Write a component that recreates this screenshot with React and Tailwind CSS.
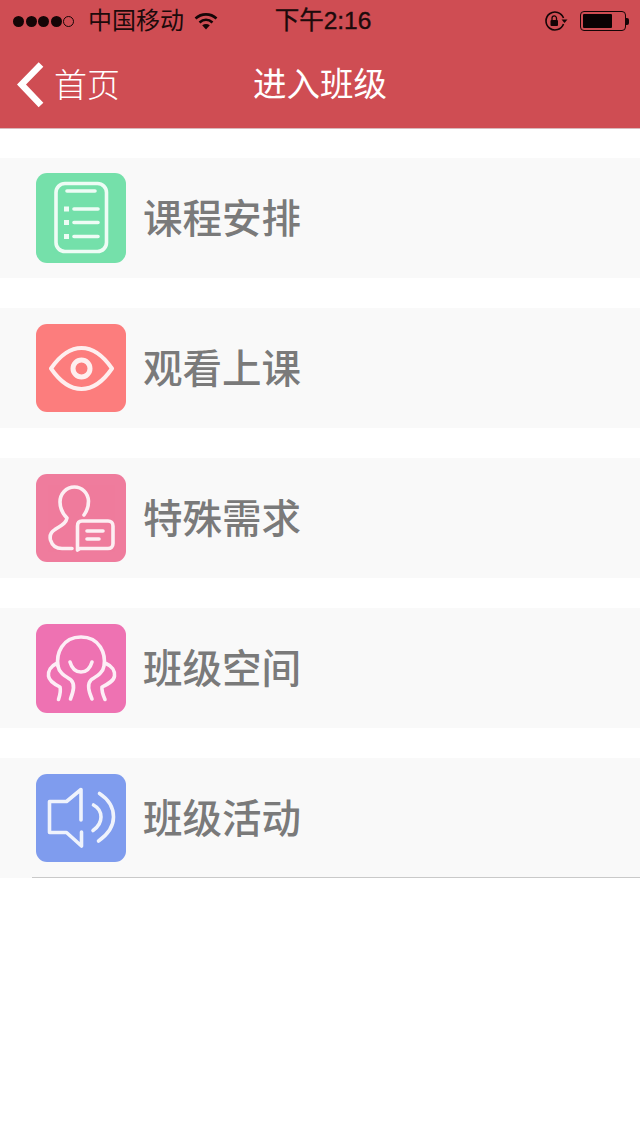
const cjk = "font-['Liberation_Sans','Noto_Sans_CJK_SC',sans-serif]";

function Stroke({ children, w = 3.6 }) {
  return (
    <svg width="90" height="90" viewBox="0 0 90 90" fill="none" stroke="#ffffff" strokeWidth={w} strokeLinecap="round" strokeLinejoin="round" opacity="0.88">
      {children}
    </svg>
  );
}

const IconDoc = () => (
  <Stroke>
    <rect x="20" y="10.5" width="50.5" height="68" rx="9" />
    <path d="M31 18h28M38 36h24M38 49.5h24M38 63.5h24" />
    <path d="M28 36h5M28 49.5h5M28 63.5h5" strokeWidth="5" strokeLinecap="butt" />
  </Stroke>
);
const IconEye = () => (
  <Stroke w={4}>
    <path d="M15 44.5C25 30 35 24 45.5 24C56 24 66 30 76 44.5C66 59 56 65 45.5 65C35 65 25 59 15 44.5Z" />
    <circle cx="45.5" cy="44.5" r="8.500" strokeWidth="5" />
  </Stroke>
);
const IconUser = () => (
  <Stroke>
    <path d="M48 41C51 37 52.5 32 52.5 27C52 19 46 13 38.5 13C30 13 24 20 24 28C24 35 27 40 31 44C30 50 24 52 19 55.5C15 58 13.5 62 14.5 66C16 71 20 74.5 26 74.5H36" />
    <path d="M46 47H72C75 47 77 49 77 52V69.5C77 72.5 75 74.5 72 74.5H44L41.5 76V52C41.5 49 43 47 46 47Z" />
    <path d="M51 57H67M51 65H63" />
  </Stroke>
);
const IconFace = () => (
  <Stroke>
    <path d="M22 42C20 30 26 13 45 13C64 13 70 30 68 42C67 49 61 52 55 56C51 60 52 66 56 75" />
    <path d="M22 42C23 49 29 52 35 56C39 60 38 66 34.500 75" />
    <path d="M34 38C36 45 40 48 45 48C50 48 54 45 56 38" />
    <path d="M20.500 39.500C15 42 12 47 12.500 52C13 57 18 60 24 63C25 67 24 71 22.500 75.500" />
    <path d="M70 39.500C76 42 79 47 78.500 52C78 57 72 60 66 63C65.500 67 67 71 69 75.500" />
  </Stroke>
);
const IconSpeaker = () => (
  <Stroke>
    <path d="M45 46V15.500L30.500 27.500H13.500V58.500H30.500L45.500 72V58" />
    <path d="M57.500 31C63 34 65 38 65 43C65 48 62 53 57 56.500" />
    <path d="M63.500 19.500C72 25 77.500 33 77.500 43C77.500 53 71 61 62.500 67" />
  </Stroke>
);

const rows = [
  { label: "课程安排", bg: "bg-[#75e0aa]", h: "h-[90px]", top: "pt-[15px]", Icon: IconDoc },
  { label: "观看上课", bg: "bg-[#fc7d7d]", h: "h-[88px]", top: "pt-[16px]", Icon: IconEye },
  { label: "特殊需求", bg: "bg-[#ef7c9d]", h: "h-[88px]", top: "pt-[16px]", Icon: IconUser },
  { label: "班级空间", bg: "bg-[#ee72b2]", h: "h-[89px]", top: "pt-[16px]", Icon: IconFace },
  { label: "班级活动", bg: "bg-[#7f9cee]", h: "h-[88px]", top: "pt-[16px]", Icon: IconSpeaker },
];

function Row({ label, bg, h, top, Icon }) {
  return (
    <div className={`h-[120px] bg-[#f9f9f9] pl-[36px] ${top}`}>
      <div className="flex items-center">
        <div className={`w-[90px] ${h} ${bg} rounded-[11px] overflow-hidden flex items-start`}>
          <Icon />
        </div>
        <span className="ml-[17px] pt-[3px] text-[39.500px] leading-none font-medium text-[#7a7a7a]">{label}</span>
      </div>
    </div>
  );
}

export default function App() {
  return (
    <div className={`w-[640px] h-[1136px] bg-white overflow-hidden ${cjk}`}>
      <header className="h-[129px] bg-[#cf4d53] border-b border-[#d9b9bb]">
        <div className="h-[42px] grid grid-cols-3 items-center text-[#1c0a0b]">
          <div className="flex items-center pl-[13px]">
            <div className="flex items-center gap-[1.500px]">
              <span className="w-[11px] h-[11px] rounded-full bg-[#150506]" />
              <span className="w-[11px] h-[11px] rounded-full bg-[#150506]" />
              <span className="w-[11px] h-[11px] rounded-full bg-[#150506]" />
              <span className="w-[11px] h-[11px] rounded-full bg-[#150506]" />
              <span className="w-[11px] h-[11px] rounded-full border border-[#150506]" />
            </div>
            <span className="ml-[14px] text-[24px] leading-none whitespace-nowrap">中国移动</span>
            <svg className="ml-[10px] shrink-0" width="24" height="18" viewBox="0 0 24 18" fill="none" stroke="#150506" strokeWidth="2.600">
              <path d="M1.500 6.500C7.500 1 16.500 1 22.500 6.500" />
              <path d="M5.500 10.500C9.500 7 14.500 7 18.500 10.500" />
              <path d="M12 17.500L8.200 13.200C10.500 11.500 13.500 11.500 15.800 13.200Z" fill="#150506" stroke="none" />
            </svg>
          </div>
          <div className="flex justify-center">
            <span className="text-[24.500px] leading-none whitespace-nowrap relative left-[3px] [-webkit-text-stroke:0.4px_#1c0a0b]">下午2:16</span>
          </div>
          <div className="flex items-center justify-end pr-[11px] gap-[12px]">
            <svg width="24" height="20" viewBox="0 0 24 20" fill="none" stroke="#150506" strokeWidth="1.600">
              <path d="M19.500 7A9 9 0 1 0 19.500 13" />
              <path d="M17.500 8.500H23.500L20.500 12Z" fill="#150506" stroke="none" />
              <rect x="6.500" y="9" width="7.500" height="6" rx="1" fill="#150506" stroke="none" />
              <path d="M8 9V7.200A2.200 2.200 0 0 1 12.500 7.200V9" strokeWidth="1.300" />
            </svg>
            <div className="flex items-center">
              <div className="w-[46px] h-[20px] rounded-[4px] border border-[#150506] p-[2px]">
                <div className="w-[29px] h-full bg-[#0a0203] rounded-[1px]" />
              </div>
              <div className="w-[3px] h-[7px] bg-[#150506] rounded-r-[2px]" />
            </div>
          </div>
        </div>
        <div className="h-[86px] grid grid-cols-3 items-center text-white">
          <div className="flex items-center pl-[17px]">
            <svg width="28" height="46" viewBox="0 0 28 46" fill="none" stroke="#ffffff" strokeWidth="6.500" className="shrink-0">
              <path d="M24 2.500L4.500 22.500L24 43" />
            </svg>
            <span className="ml-[9px] text-[33px] leading-none font-light whitespace-nowrap">首页</span>
          </div>
          <div className="flex justify-center">
            <span className="text-[33.500px] leading-none whitespace-nowrap">进入班级</span>
          </div>
          <div />
        </div>
      </header>
      <main className="pt-[29px] flex flex-col gap-[30px]">
        {rows.map((r) => (
          <Row key={r.label} {...r} />
        ))}
      </main>
      <div className="relative ml-[32px] h-px bg-[#c9c9c9] -mt-px" />
    </div>
  );
}
